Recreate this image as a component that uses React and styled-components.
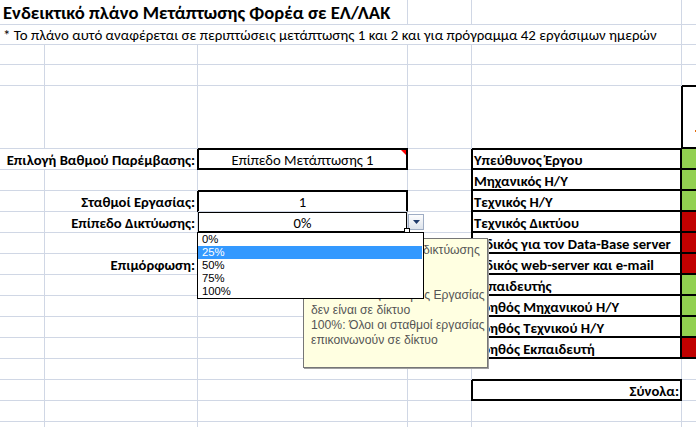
import React from 'react';
import styled, { createGlobalStyle } from 'styled-components';

const GRID = '#d0d7e5';
const GREEN = '#92d050';
const RED = '#c00000';

const GlobalStyle = createGlobalStyle`
  html, body { margin: 0; padding: 0; background: #fff; }
  #root { width: 696px; height: 427px; overflow: hidden; }
`;

const Sheet = styled.div`
  position: relative;
  width: 696px;
  height: 427px;
  overflow: hidden;
  display: grid;
  grid-template-columns: 45px 153px 210px 64px 210px 64px 64px;
  grid-template-rows: 25px 20px 20px 21px 63px repeat(14, 21px);
  font-family: Carlito, 'Liberation Sans', sans-serif;
  font-size: 14.67px;
  color: #000;
  background: #fff;
`;

const shadows = (p) => {
  const s = [];
  if (p.$bt) s.push('inset 0 1px 0 0 #000', '0 -1px 0 0 #000');
  if (p.$bl) s.push('inset 1px 0 0 0 #000', '-1px 0 0 0 #000');
  if (p.$br) s.push('inset -1px 0 0 0 #000');
  if (p.$bb) s.push('inset 0 -1px 0 0 #000');
  if (p.$thin) s.push('inset 0 0 0 1px #000');
  return s.length ? s.join(', ') : 'none';
};

const Cell = styled.div`
  position: relative;
  grid-column: ${(p) => p.$span || 'auto'};
  box-sizing: border-box;
  min-width: 0;
  display: flex;
  align-items: flex-end;
  justify-content: ${(p) =>
    p.$align === 'right' ? 'flex-end' : p.$align === 'center' ? 'center' : 'flex-start'};
  padding: 0 2px 0 2px;
  line-height: 18px;
  font-weight: ${(p) => (p.$bold ? 700 : 400)};
  white-space: nowrap;
  background: ${(p) => p.$fill || 'transparent'};
  border-right: 1px solid ${(p) => (p.$br ? '#000' : p.$fill || GRID)};
  border-bottom: 1px solid ${(p) => (p.$bb ? '#000' : p.$fill || GRID)};
  box-shadow: ${shadows};
`;

const TitleCell = styled(Cell)`
  font-size: 18.67px;
  font-weight: 700;
  line-height: 22px;
  padding-left: 3px;
`;

const NoteCell = styled(Cell)`
  font-size: 14.9px;
  padding-left: 3px;
`;

const CommentMark = styled.span`
  position: absolute;
  top: 1px;
  right: 1px;
  width: 0;
  height: 0;
  border-top: 5px solid #ff0000;
  border-left: 5px solid transparent;
`;

const HeaderMark = styled.span`
  align-self: flex-start;
  margin: 44px 0 0 11px;
  width: 2px;
  height: 2px;
  background: #e46c0a;
`;

const DropButton = styled.div`
  position: absolute;
  left: 408px;
  top: 214px;
  width: 16px;
  height: 16px;
  box-sizing: border-box;
  border: 1px solid #9fadc4;
  background: linear-gradient(#fdfdfe, #dde3eb);
  display: flex;
  align-items: center;
  justify-content: center;
  z-index: 2;
`;

const FillHandle = styled.span`
  position: absolute;
  left: 404px;
  top: 228px;
  width: 4px;
  height: 4px;
  border: 1px solid #000;
  background: #fff;
  z-index: 2;
`;

const ListBox = styled.ul`
  position: absolute;
  left: 197px;
  top: 232px;
  width: 227px;
  height: 67px;
  box-sizing: border-box;
  margin: 0;
  padding: 0;
  list-style: none;
  border: 1px solid #000;
  background: #fff;
  z-index: 4;
  font-family: 'Liberation Sans', Arial, sans-serif;
  font-size: 11.3px;
`;

const Option = styled.li`
  height: 13px;
  line-height: 13px;
  padding-left: 4px;
  margin-right: 1px;
  background: ${(p) => (p.$active ? '#3399ff' : 'transparent')};
  color: ${(p) => (p.$active ? '#fff' : '#000')};
`;

const Tip = styled.div`
  position: absolute;
  left: 303px;
  top: 238px;
  width: 185px;
  height: 130px;
  box-sizing: border-box;
  padding: 4px 0 0 7px;
  background: #ffffe1;
  border: 1px solid #767676;
  box-shadow: 1px 1px 0 #a0a0a0;
  z-index: 3;
  overflow: hidden;
  font-family: 'Liberation Sans', Arial, sans-serif;
  font-size: 12.2px;
  line-height: 15px;
  color: #555;
  white-space: nowrap;
`;

const TipLine = styled.div`
  height: 15px;
`;

const roles = [
  ['Υπεύθυνος Έργου', GREEN],
  ['Μηχανικός Η/Υ', GREEN],
  ['Τεχνικός Η/Υ', GREEN],
  ['Τεχνικός Δικτύου', RED],
  ['Ειδικός για τον Data-Base server', RED],
  ['Ειδικός web-server και e-mail', RED],
  ['Εκπαιδευτής', GREEN],
  ['Βοηθός Μηχανικού Η/Υ', GREEN],
  ['Βοηθός Τεχνικού Η/Υ', GREEN],
  ['Βοηθός Εκπαιδευτή', RED],
];

const labels = {
  2: 'Σταθμοί Εργασίας:',
  3: 'Επίπεδο Δικτύωσης:',
  5: 'Επιμόρφωση:',
};

const options = ['0%', '25%', '50%', '75%', '100%'];

const tipLines = [
  'Επιλέξτε το επίπεδο δικτύωσης',
  'των σταθμών:',
  '\u00a0',
  '0%: Κανένας σταθμός Εργασίας',
  'δεν είναι σε δίκτυο',
  '100%: Όλοι οι σταθμοί εργασίας',
  'επικοινωνούν σε δίκτυο',
];

function Blank({ n }) {
  return Array.from({ length: n }, (_, i) => <Cell key={i} />);
}

function valueCell(i) {
  if (i === 0)
    return (
      <Cell $bt $bl $br $bb $align="center">
        Επίπεδο Μετάπτωσης 1
        <CommentMark />
      </Cell>
    );
  if (i === 2)
    return (
      <Cell $bt $bl $br $align="center">
        1
      </Cell>
    );
  if (i === 3)
    return (
      <Cell $thin $align="center">
        0%
      </Cell>
    );
  if (i === 5) return <Cell $bt $bl $br $bb />;
  return <Cell />;
}

export default function App() {
  return (
    <>
      <GlobalStyle />
      <Sheet>
        <TitleCell $span="1 / 4">Ενδεικτικό πλάνο Μετάπτωσης Φορέα σε ΕΛ/ΛΑΚ</TitleCell>
        <Blank n={4} />

        <NoteCell $span="1 / 6">
          * Το πλάνο αυτό αναφέρεται σε περιπτώσεις μετάπτωσης 1 και 2 και για πρόγραμμα 42 εργάσιμων ημερών
        </NoteCell>
        <Blank n={2} />

        <Blank n={7} />
        <Blank n={7} />

        <Blank n={5} />
        <Cell $bt $bl $bb>
          <HeaderMark />
        </Cell>
        <Cell />

        {roles.map(([name, color], i) => (
          <React.Fragment key={name}>
            {i === 0 ? (
              <Cell $span="1 / 3" $bold $align="right">
                Επιλογή Βαθμού Παρέμβασης:
              </Cell>
            ) : (
              <>
                <Cell />
                {labels[i] ? (
                  <Cell $bold $align="right">
                    {labels[i]}
                  </Cell>
                ) : (
                  <Cell />
                )}
              </>
            )}
            {valueCell(i)}
            <Cell />
            <Cell $bt={i === 0} $bl $br $bb $bold>
              {name}
            </Cell>
            <Cell $fill={color} $bb />
            <Cell />
          </React.Fragment>
        ))}

        <Blank n={7} />

        <Blank n={4} />
        <Cell $bt $bl $br $bb $bold $align="right">
          Σύνολα:
        </Cell>
        <Blank n={2} />

        <Blank n={7} />
        <Blank n={7} />

        <DropButton>
          <svg width="7" height="4" viewBox="0 0 7 4">
            <polygon points="0,0 7,0 3.5,4" fill="#1f3a6a" />
          </svg>
        </DropButton>
        <FillHandle />

        <Tip>
          {tipLines.map((t, i) => (
            <TipLine key={i}>{t}</TipLine>
          ))}
        </Tip>

        <ListBox>
          {options.map((o) => (
            <Option key={o} $active={o === '25%'}>
              {o}
            </Option>
          ))}
        </ListBox>
      </Sheet>
    </>
  );
}
